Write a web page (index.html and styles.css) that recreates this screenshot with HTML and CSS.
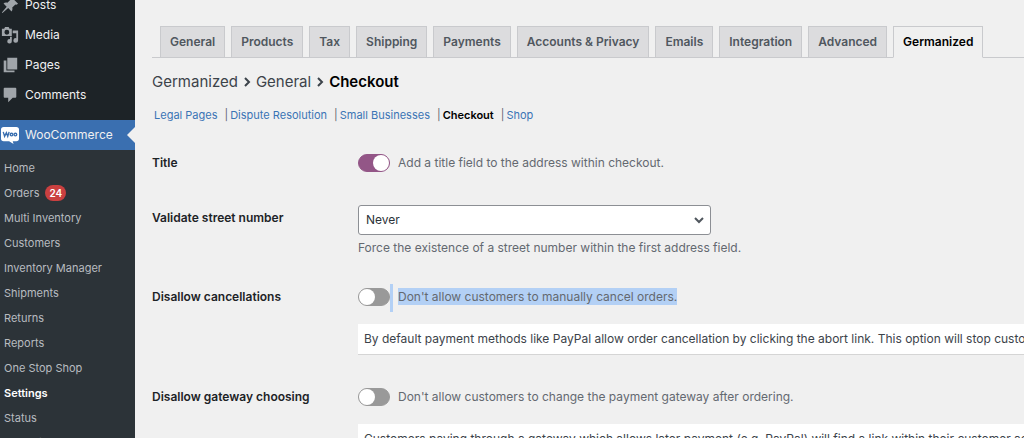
FILE: index.html
```html
<!DOCTYPE html>
<html lang="en">
<head>
    <meta charset="UTF-8">
    <meta name="viewport" content="width=device-width, initial-scale=1.0">
    <title>WooCommerce settings</title>
    <link rel="stylesheet" href="styles.css">
</head>
<body>
    <nav class="sidebar">
        <ul class="menu">
            <li><a href="#"><svg class="icon" viewBox="0 0 20 20"><path d="M10.4 3l1-1.9 7.6 7.5-1.900 1-1.100-.2-3.500 3.400c.5 1.900.2 3.300-.8 4.300l-3.700-3.700L1.600 18.800 1 18.300l5.300-6.400-3.500-3.600c1.100-1 2.500-1.200 4.300-.8l3.500-3.400z"/></svg>Posts</a></li>
            <li><a href="#"><svg class="icon" viewBox="0 0 20 20"><path fill-rule="evenodd" d="M1 3h2.500l1-2h4l1 2H12v8H1zM6.500 4.300a2.700 2.700 0 1 0 0 5.400 2.700 2.700 0 0 0 0-5.400z"/><path d="M13 5h6v11a2.600 2.600 0 1 1-2-2.500V8h-4zM10 12h2v5a2.500 2.500 0 1 1-2-2.400z"/></svg>Media</a></li>
            <li><a href="#"><svg class="icon" viewBox="0 0 20 20"><path d="M7 2h11v13H7zM3 5h3v11h9v2H3z"/></svg>Pages</a></li>
            <li><a href="#"><svg class="icon" viewBox="0 0 20 20"><path d="M4 2h12q1 0 1 1v9q0 1-1 1h-3l-5 5v-5H4q-1 0-1-1V3q0-1 1-1z"/></svg>Comments</a></li>
            <li class="current"><a href="#"><svg class="icon" viewBox="0 0 20 20"><path d="M3 1h14q3 0 3 3v10q0 3-3 3h-4l1 3-5-3H3q-3 0-3-3V4q0-3 3-3z"/><path class="woo" d="M2.500 6.500l1.500 5 2-4 1.500 4 1.500-5"/><circle class="woo" cx="11.700" cy="9.500" r="1.500"/><circle class="woo" cx="16" cy="9.500" r="1.500"/></svg>WooCommerce</a></li>
        </ul>
        <ul class="submenu">
            <li><a href="#">Home</a></li>
            <li><a href="#">Orders <span class="count">24</span></a></li>
            <li><a href="#">Multi Inventory</a></li>
            <li><a href="#">Customers</a></li>
            <li><a href="#">Inventory Manager</a></li>
            <li><a href="#">Shipments</a></li>
            <li><a href="#">Returns</a></li>
            <li><a href="#">Reports</a></li>
            <li><a href="#">One Stop Shop</a></li>
            <li><a href="#" class="active">Settings</a></li>
            <li><a href="#">Status</a></li>
            <li><a href="#">Extensions</a></li>
        </ul>
    </nav>
    <main class="content">
        <nav class="tabs">
            <a href="#">General</a>
            <a href="#">Products</a>
            <a href="#">Tax</a>
            <a href="#">Shipping</a>
            <a href="#">Payments</a>
            <a href="#">Accounts &amp; Privacy</a>
            <a href="#">Emails</a>
            <a href="#">Integration</a>
            <a href="#">Advanced</a>
            <a href="#" class="active">Germanized</a>
        </nav>
        <h1 class="breadcrumb">
            <a href="#">Germanized</a>
            <svg class="sep" viewBox="0 0 8 12"><path d="M2 2l4 4-4 4"/></svg>
            <a href="#">General</a>
            <svg class="sep" viewBox="0 0 8 12"><path d="M2 2l4 4-4 4"/></svg>
            <strong>Checkout</strong>
        </h1>
        <ul class="sections">
            <li><a href="#">Legal Pages</a></li>
            <li><a href="#">Dispute Resolution</a></li>
            <li><a href="#">Small Businesses</a></li>
            <li><a href="#" class="active">Checkout</a></li>
            <li><a href="#">Shop</a></li>
        </ul>
        <form class="settings">
            <div class="row">
                <label class="name" for="title">Title</label>
                <div class="field">
                    <div class="option">
                        <input type="checkbox" class="toggle" id="title" checked>
                        <label for="title">Add a title field to the address within checkout.</label>
                    </div>
                </div>
            </div>
            <div class="row">
                <label class="name name-select" for="street">Validate street number</label>
                <div class="field">
                    <div class="select-wrap">
                        <select id="street" class="select">
                            <option>Never</option>
                        </select>
                        <svg class="chevron" viewBox="0 0 12 12"><path d="M2 4l4 4 4-4"/></svg>
                    </div>
                    <p class="description">Force the existence of a street number within the first address field.</p>
                </div>
            </div>
            <div class="row">
                <label class="name" for="cancel">Disallow cancellations</label>
                <div class="field">
                    <div class="option">
                        <input type="checkbox" class="toggle" id="cancel">
                        <span class="caret"></span>
                        <label for="cancel"><mark>Don't allow customers to manually cancel orders.</mark></label>
                    </div>
                    <div class="notice">By default payment methods like PayPal allow order cancellation by clicking the abort link. This option will stop customers from manually cancelling orders.</div>
                </div>
            </div>
            <div class="row">
                <label class="name" for="gateway">Disallow gateway choosing</label>
                <div class="field">
                    <div class="option">
                        <input type="checkbox" class="toggle" id="gateway">
                        <label for="gateway">Don't allow customers to change the payment gateway after ordering.</label>
                    </div>
                    <div class="notice">Customers paying through a gateway which allows later payment (e.g. PayPal) will find a link within their customer account which redirects them to the pay page.</div>
                </div>
            </div>
        </form>
    </main>
</body>
</html>
```

FILE: styles.css
```css
* {
    box-sizing: border-box;
}

body {
    margin: 0;
    display: flex;
    height: 100vh;
    overflow: hidden;
    background: #f0f0f0;
    color: #3c434a;
    font: 12px/20px Inter, "Liberation Sans", sans-serif;
}

ul {
    list-style: none;
    margin: 0;
    padding: 0;
}

a {
    color: #3a74b5;
    text-decoration: none;
}

/* Sidebar */
.sidebar {
    flex: 0 0 135px;
    background: #1d2327;
}

.menu {
    margin-top: -10px;
}

.menu a {
    display: flex;
    align-items: center;
    gap: 6px;
    height: 30px;
    padding-left: 1px;
    color: #f0f0f1;
}

.icon {
    width: 18px;
    height: 18px;
    fill: #a0a5aa;
}

.menu .current {
    position: relative;
    margin-top: 10px;
    background: #3a6fb0;
}

.current .icon {
    fill: #fff;
}

.current .woo {
    fill: none;
    stroke: #3a6fb0;
    stroke-width: 1.5;
}

.current::after {
    content: "";
    position: absolute;
    right: 0;
    top: 7px;
    border: 8px solid transparent;
    border-left: 0;
    border-right-color: #f0f0f0;
}

.submenu {
    padding: 5px 0 0 4px;
    background: #2c3338;
    font-size: 11px;
}

.submenu a {
    display: flex;
    align-items: center;
    gap: 6px;
    height: 25px;
    color: #b8bcc0;
}

.submenu .active {
    color: #fff;
    font-weight: 600;
}

.count {
    padding: 0 4px;
    border-radius: 8px;
    background: #ca4040;
    color: #fff;
    font-size: 10px;
    line-height: 16px;
    font-weight: 600;
}

/* Settings page */
.content {
    flex: 1;
    min-width: 0;
    padding: 26px 0 0 17px;
}

.tabs {
    display: flex;
    gap: 6px;
    padding-left: 8px;
    border-bottom: 1px solid #c9cacd;
}

.tabs a {
    padding: 5px 9px;
    margin-bottom: -1px;
    border: 1px solid #c9cacd;
    background: #dcdcde;
    color: #50575e;
    font-weight: 600;
    white-space: nowrap;
}

.tabs .active {
    border-bottom-color: #f0f0f0;
    background: #f0f0f0;
    color: #000;
}

.breadcrumb {
    display: flex;
    align-items: center;
    gap: 5px;
    margin: 14px 0 0;
    font-size: 15px;
    font-weight: 400;
}

.breadcrumb a {
    color: #3c434a;
}

.breadcrumb strong {
    color: #000;
    font-weight: 600;
}

.sep {
    width: 8px;
    height: 12px;
    fill: none;
    stroke: #3c434a;
    stroke-width: 2;
}

.sections {
    display: flex;
    padding-left: 2px;
    margin-top: 13px;
    font-size: 11px;
}

.sections li + li::before {
    content: "|";
    margin: 0 2px 0 7px;
    color: #646970;
}

.sections .active {
    color: #000;
    font-weight: 600;
}

.settings {
    margin-top: 28px;
}

.row {
    display: grid;
    grid-template-columns: 206px minmax(0, 1fr);
    margin-bottom: 32px;
}

.name {
    color: #1d2327;
    font-weight: 600;
}

.name-select {
    padding-top: 3px;
}

.field {
    color: #646970;
}

.option {
    display: flex;
    align-items: center;
    gap: 8px;
    height: 20px;
    position: relative;
}

.toggle {
    appearance: none;
    width: 32px;
    height: 18px;
    margin: 0;
    border: 1px solid #999;
    border-radius: 9px;
    background: #999;
}

.toggle::before {
    content: "";
    display: block;
    width: 16px;
    height: 16px;
    border-radius: 8px;
    background: #fff;
}

.toggle:checked {
    border-color: #935687;
    background: #935687;
}

.toggle:checked::before {
    margin-left: 14px;
}

/* selection highlight */
.caret {
    position: absolute;
    left: 32px;
    top: -3px;
    width: 3px;
    height: 28px;
    background: #b3d0f5;
}

mark {
    padding: 1px 0;
    background: #b3d0f5;
    color: inherit;
}

.select-wrap {
    position: relative;
    max-width: 353px;
}

.select {
    appearance: none;
    display: block;
    width: 100%;
    height: 30px;
    padding: 0 7px;
    border: 1px solid #8c8f94;
    border-radius: 3px;
    background: #fff;
    color: #2c3338;
    font: inherit;
}

.chevron {
    position: absolute;
    right: 6px;
    top: 9px;
    width: 12px;
    height: 12px;
    fill: none;
    stroke: #50575e;
    stroke-width: 2;
    pointer-events: none;
}

.description {
    margin: 6px 0 0;
    line-height: 14px;
}

.notice {
    margin-top: 17px;
    padding: 5px 6px;
    overflow: hidden;
    border-bottom: 1px solid #d5d5d5;
    background: #fff;
    color: #3c434a;
    white-space: nowrap;
}
```
